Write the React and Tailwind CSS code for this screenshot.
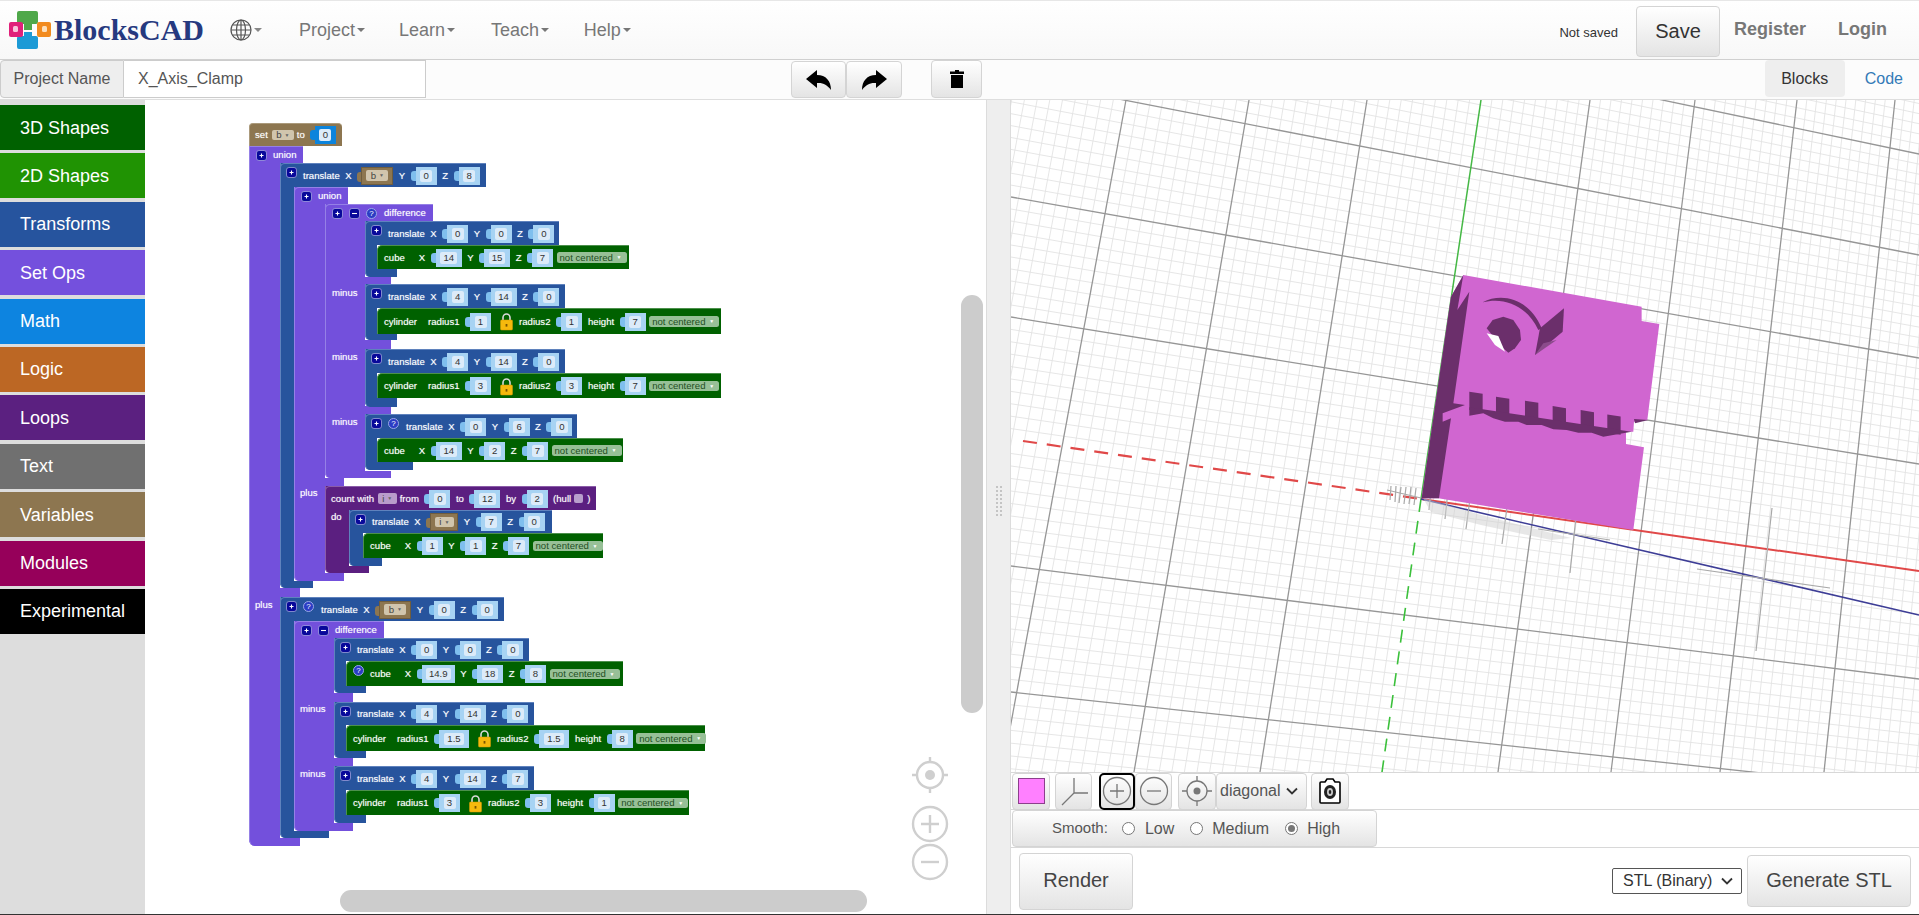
import React from 'react';

const C = {
  p: 'bg-[#7350dc] border-[#9580e6]',
  b: 'bg-[#27549d] border-[#5f82bd]',
  g: 'bg-[#006100] border-[#4c904c]',
  d: 'bg-[#5b1f80] border-[#8b5ca8]',
  t: 'bg-[#8d7650] border-[#ab9a7c]',
};
const glow = '[text-shadow:0_0_1px_rgba(255,255,255,0.55)]';

function Piece({ c, p }) {
  return <div className={`absolute border-l ${C[c]} ${p}`} />;
}
function Row({ c, p, children }) {
  return <div className={`absolute flex items-center border-t border-l whitespace-nowrap ${C[c]} ${p}`}>{children}</div>;
}
function Txt({ children, ml = 'ml-[5.5px]' }) {
  return <span className={`shrink-0 text-white leading-none ${glow} ${ml}`}>{children}</span>;
}
function Label({ p, children }) {
  return <span className={`absolute text-white leading-[12px] ${glow} ${p}`}>{children}</span>;
}
const NW = { 1: 'w-[21px]', 2: 'w-[26px]', 3: 'w-[30px]', 4: 'w-[33px]' };
function N({ v, ml = 'ml-[10.5px]', dark }) {
  return (
    <span className={`relative shrink-0 h-[18px] flex items-center justify-center ${dark ? 'bg-[#0c84dc]' : 'bg-[#a7d3f3]'} ${NW[String(v).length]} ${ml}`}>
      <span className={`absolute left-[-5px] top-[4px] w-[5px] h-[10px] rounded-l-[3px] ${dark ? 'bg-[#0c84dc]' : 'bg-[#7fbfee]'}`} />
      <span className="px-[3px] h-[12px] min-w-[12px] rounded-[2px] bg-[#dcebf9] text-[#333] text-center leading-[12px]">{v}</span>
    </span>
  );
}
function Mini({ v, w = 'w-[22px]', bg = 'bg-[#d1c5ad]', ml = 'ml-[4px]' }) {
  return (
    <span className={`shrink-0 h-[10.5px] rounded-[2px] flex items-center justify-center gap-[3px] text-[#444] leading-none ${w} ${bg} ${ml}`}>
      {v}<span className="text-[5px] text-[#666]">▼</span>
    </span>
  );
}
function Var({ v, w = 'w-[32px]', iw = 'w-[22px]' }) {
  return (
    <span className={`relative shrink-0 ml-[9.6px] h-[18px] flex items-center justify-center bg-[#8d7650] border border-[#6f5d3e] ${w}`}>
      <span className="absolute left-[-5px] top-[4px] w-[4px] h-[10px] rounded-l-[3px] bg-[#8d7650]" />
      <Mini v={v} w={iw} ml="ml-0" />
    </span>
  );
}
function Dd() {
  return (
    <span className="shrink-0 ml-[3.5px] w-[70px] h-[10.5px] rounded-[2.5px] bg-[#97c097] text-[#1f4f1f] flex items-center justify-between pl-[3px] pr-[5px] leading-none">
      not centered<span className="text-[5px] text-white">▼</span>
    </span>
  );
}
function Btn({ minus, ml = 'ml-[5px]' }) {
  return (
    <svg width="11" height="11" viewBox="0 0 11 11" className={`shrink-0 self-start mt-[3px] ${ml}`}>
      <rect x="0.5" y="0.5" width="10" height="10" rx="2.5" fill="#08089a" stroke="#c8c8ee" strokeWidth="0.6" />
      <path d={minus ? 'M3 5.5H8' : 'M3.5 5.5H7.5M5.5 3.5V7.5'} stroke="#fff" strokeWidth="1.1" />
    </svg>
  );
}
function Q({ ml = 'ml-[6px]' }) {
  return (
    <span className={`shrink-0 self-start mt-[3px] w-[11px] h-[11px] rounded-full bg-[#2b3cc4] border border-[#9aa7e8] text-white text-[8px] leading-[9px] text-center ${ml}`}>?</span>
  );
}
function Lock() {
  return (
    <svg width="13" height="19" viewBox="0 0 13 19" className="shrink-0 ml-[9px]">
      <path d="M3 9V5.5a3.5 3.5 0 0 1 7 0V9" fill="none" stroke="#d9d9d9" strokeWidth="1.6" />
      <rect x="0.5" y="8" width="12" height="10" rx="1" fill="#f6b90d" stroke="#d99a05" strokeWidth="0.5" />
      <rect x="5.6" y="12" width="1.8" height="2.6" fill="#7a5500" />
    </svg>
  );
}
function Translate({ p, v, q, vr, vw, iw }) {
  return (
    <Row c="b" p={p}>
      <Btn />
      {q && <Q />}
      <Txt ml={q ? 'ml-[7px]' : 'ml-[6px]'}>translate</Txt>
      <Txt>X</Txt>
      {vr ? <Var v={vr} w={vw} iw={iw} /> : <N v={v[0]} />}
      <Txt>Y</Txt>
      <N v={v[1]} />
      <Txt>Z</Txt>
      <N v={v[2]} />
    </Row>
  );
}
function Cube({ p, v, q }) {
  return (
    <Row c="g" p={`rounded-tl-[5px] ${p}`}>
      {q && <Q />}
      <Txt ml="ml-[6px]">cube</Txt>
      <Txt ml="ml-[14px]">X</Txt>
      <N v={v[0]} />
      <Txt>Y</Txt>
      <N v={v[1]} />
      <Txt>Z</Txt>
      <N v={v[2]} />
      <Dd />
    </Row>
  );
}
function Cylinder({ p, a, b, h }) {
  return (
    <Row c="g" p={`rounded-tl-[5px] ${p}`}>
      <Txt ml="ml-[6px]">cylinder</Txt>
      <Txt ml="ml-[11px]">radius1</Txt>
      <N v={a} />
      <Lock />
      <Txt ml="ml-[6px]">radius2</Txt>
      <N v={b} />
      <Txt ml="ml-[6px]">height</Txt>
      <N v={h} />
      <Dd />
    </Row>
  );
}

function Blocks() {
  return (
    <div className="absolute left-[-145px] top-[-100px] w-[1000px] h-[900px] text-[9.6px]">
      {/* outer union */}
      <Piece c="p" p="left-[249px] top-[146px] w-[31px] h-[700px] rounded-bl-[6px]" />
      <Piece c="p" p="left-[249px] top-[588px] w-[51px] h-[9px]" />
      <Piece c="p" p="left-[249px] top-[838px] w-[51px] h-[8px] rounded-bl-[6px]" />
      <Row c="t" p="left-[249px] top-[123px] w-[93px] h-[23px] rounded-t-[4px]">
        <Txt ml="ml-[5px]">set</Txt>
        <Mini v="b" />
        <Txt ml="ml-[3px]">to</Txt>
        <N v="0" dark ml="ml-[10px]" />
      </Row>
      <Row c="p" p="left-[249px] top-[146px] w-[54px] h-[17px]">
        <Btn ml="ml-[6px]" />
        <Txt ml="ml-[6px]">union</Txt>
      </Row>
      <Label p="left-[255px] top-[599px]">plus</Label>

      {/* first translate */}
      <Piece c="b" p="left-[280px] top-[163px] w-[14px] h-[425px] rounded-bl-[5px]" />
      <Piece c="b" p="left-[280px] top-[581px] w-[33px] h-[7px] rounded-bl-[5px]" />
      <Translate p="left-[280px] top-[163px] w-[206px] h-[24px] rounded-tl-[5px]" v={[0, 0, 8]} vr="b" />

      {/* inner union */}
      <Piece c="p" p="left-[294px] top-[187px] w-[31px] h-[394px] rounded-bl-[5px]" />
      <Piece c="p" p="left-[294px] top-[478px] w-[50px] h-[8px]" />
      <Piece c="p" p="left-[294px] top-[573px] w-[50px] h-[8px] rounded-bl-[5px]" />
      <Row c="p" p="left-[294px] top-[187px] w-[54px] h-[17px] rounded-tl-[5px]">
        <Btn ml="ml-[6px]" />
        <Txt ml="ml-[6px]">union</Txt>
      </Row>
      <Label p="left-[300px] top-[487px]">plus</Label>

      {/* difference 1 */}
      <Piece c="p" p="left-[325px] top-[204px] w-[40px] h-[274px] rounded-bl-[5px]" />
      <Piece c="p" p="left-[325px] top-[277px] w-[66px] h-[8px]" />
      <Piece c="p" p="left-[325px] top-[340px] w-[66px] h-[9px]" />
      <Piece c="p" p="left-[325px] top-[406px] w-[66px] h-[8px]" />
      <Piece c="p" p="left-[325px] top-[471px] w-[66px] h-[7px] rounded-bl-[5px]" />
      <Row c="p" p="left-[325px] top-[204px] w-[108px] h-[17px] rounded-tl-[5px]">
        <Btn ml="ml-[6px]" />
        <Btn minus ml="ml-[6px]" />
        <Q />
        <Txt ml="ml-[7px]">difference</Txt>
      </Row>
      <Label p="left-[332px] top-[287px]">minus</Label>
      <Label p="left-[332px] top-[351px]">minus</Label>
      <Label p="left-[332px] top-[416px]">minus</Label>

      <Piece c="b" p="left-[365px] top-[221px] w-[12px] h-[56px] rounded-bl-[5px]" />
      <Piece c="b" p="left-[365px] top-[269px] w-[32px] h-[8px] rounded-bl-[5px]" />
      <Translate p="left-[365px] top-[221px] w-[194px] h-[24px] rounded-tl-[5px]" v={[0, 0, 0]} />
      <Cube p="left-[377px] top-[245px] w-[252px] h-[24px]" v={[14, 15, 7]} />

      <Piece c="b" p="left-[365px] top-[284px] w-[12px] h-[56px] rounded-bl-[5px]" />
      <Piece c="b" p="left-[365px] top-[334px] w-[32px] h-[6px] rounded-bl-[5px]" />
      <Translate p="left-[365px] top-[284px] w-[200px] h-[24px] rounded-tl-[5px]" v={[4, 14, 0]} />
      <Cylinder p="left-[377px] top-[308px] w-[344px] h-[26px]" a={1} b={1} h={7} />

      <Piece c="b" p="left-[365px] top-[349px] w-[12px] h-[58px] rounded-bl-[5px]" />
      <Piece c="b" p="left-[365px] top-[398px] w-[32px] h-[9px] rounded-bl-[5px]" />
      <Translate p="left-[365px] top-[349px] w-[200px] h-[24px] rounded-tl-[5px]" v={[4, 14, 0]} />
      <Cylinder p="left-[377px] top-[373px] w-[344px] h-[25px]" a={3} b={3} h={7} />

      <Piece c="b" p="left-[365px] top-[414px] w-[12px] h-[56px] rounded-bl-[5px]" />
      <Piece c="b" p="left-[365px] top-[462px] w-[48px] h-[8px] rounded-bl-[5px]" />
      <Translate p="left-[365px] top-[414px] w-[212px] h-[24px] rounded-tl-[5px]" v={[0, 6, 0]} q />
      <Cube p="left-[377px] top-[438px] w-[246px] h-[24px]" v={[14, 2, 7]} />

      {/* count */}
      <Piece c="d" p="left-[325px] top-[486px] w-[24px] h-[87px] rounded-bl-[5px]" />
      <Piece c="d" p="left-[325px] top-[566px] w-[44px] h-[7px] rounded-bl-[5px]" />
      <Row c="d" p="left-[325px] top-[486px] w-[271px] h-[24px] rounded-tl-[5px]">
        <Txt ml="ml-[5px]">count with</Txt>
        <Mini v="i" w="w-[19px]" bg="bg-[#b99ccb]" ml="ml-[3.5px]" />
        <Txt ml="ml-[3px]">from</Txt>
        <N v="0" />
        <Txt>to</Txt>
        <N v="12" />
        <Txt>by</Txt>
        <N v="2" />
        <Txt>(hull</Txt>
        <span className="ml-[3px] w-[9px] h-[9px] rounded-[2px] bg-[#b89fcc]" />
        <Txt ml="ml-[4px]">)</Txt>
      </Row>
      <Label p="left-[331px] top-[511px]">do</Label>
      <Piece c="b" p="left-[349px] top-[510px] w-[14px] h-[56px] rounded-bl-[5px]" />
      <Piece c="b" p="left-[349px] top-[558px] w-[33px] h-[8px] rounded-bl-[5px]" />
      <Translate p="left-[349px] top-[510px] w-[203px] h-[23px] rounded-tl-[5px]" v={[0, 7, 0]} vr="i" vw="w-[28px]" iw="w-[19px]" />
      <Cube p="left-[363px] top-[533px] w-[240px] h-[25px]" v={[1, 1, 7]} />

      {/* second translate */}
      <Piece c="b" p="left-[280px] top-[597px] w-[14px] h-[241px] rounded-bl-[5px]" />
      <Piece c="b" p="left-[280px] top-[831px] w-[49px] h-[7px] rounded-bl-[5px]" />
      <Translate p="left-[280px] top-[597px] w-[224px] h-[24px] rounded-tl-[5px]" v={[0, 0, 0]} q vr="b" />

      <Piece c="p" p="left-[294px] top-[621px] w-[40px] h-[210px] rounded-bl-[5px]" />
      <Piece c="p" p="left-[294px] top-[693px] w-[59px] h-[9px]" />
      <Piece c="p" p="left-[294px] top-[758px] w-[59px] h-[9px]" />
      <Piece c="p" p="left-[294px] top-[823px] w-[59px] h-[8px] rounded-bl-[5px]" />
      <Row c="p" p="left-[294px] top-[621px] w-[90px] h-[17px] rounded-tl-[5px]">
        <Btn ml="ml-[6px]" />
        <Btn minus ml="ml-[6px]" />
        <Txt ml="ml-[6px]">difference</Txt>
      </Row>
      <Label p="left-[300px] top-[703px]">minus</Label>
      <Label p="left-[300px] top-[768px]">minus</Label>

      <Piece c="b" p="left-[334px] top-[638px] w-[12px] h-[55px] rounded-bl-[5px]" />
      <Piece c="b" p="left-[334px] top-[686px] w-[32px] h-[7px] rounded-bl-[5px]" />
      <Translate p="left-[334px] top-[638px] w-[195px] h-[23px] rounded-tl-[5px]" v={[0, 0, 0]} />
      <Cube p="left-[346px] top-[661px] w-[277px] h-[25px]" v={['14.9', 18, 8]} q />

      <Piece c="b" p="left-[334px] top-[702px] w-[12px] h-[56px] rounded-bl-[5px]" />
      <Piece c="b" p="left-[334px] top-[751px] w-[32px] h-[7px] rounded-bl-[5px]" />
      <Translate p="left-[334px] top-[702px] w-[200px] h-[23px] rounded-tl-[5px]" v={[4, 14, 0]} />
      <Cylinder p="left-[346px] top-[725px] w-[359px] h-[26px]" a="1.5" b="1.5" h={8} />

      <Piece c="b" p="left-[334px] top-[766px] w-[12px] h-[57px] rounded-bl-[5px]" />
      <Piece c="b" p="left-[334px] top-[815px] w-[32px] h-[8px] rounded-bl-[5px]" />
      <Translate p="left-[334px] top-[766px] w-[200px] h-[24px] rounded-tl-[5px]" v={[4, 14, 7]} />
      <Cylinder p="left-[346px] top-[790px] w-[343px] h-[25px]" a={3} b={3} h={1} />
    </div>
  );
}

const tops = [-12, 115, 238, 356, 470, 579, 684, 786, 884, 980];
const bots = [-140, -9, 123, 249, 371, 487, 600, 709, 813, 915];
const hl = [-255, -137, -22, 97, 217, 341, 466, 592, 720];
const hr = [-47, 54, 155, 258, 364, 471, 579, 690, 800];

function lerp(a, b, t) {
  return a + (b - a) * t;
}

const teeth = [
  [298, 425],
  [378, 440],
  [465, 452],
  [548, 468],
  [632, 480],
  [712, 493],
];

function Grid() {
  const minor = [];
  for (let i = 0; i < tops.length - 1; i++) {
    for (let j = 1; j < 10; j++) {
      minor.push([lerp(tops[i], tops[i + 1], j / 10), 0, lerp(bots[i], bots[i + 1], j / 10), 672]);
    }
  }
  for (let i = 0; i < hl.length - 1; i++) {
    for (let j = 1; j < 10; j++) {
      minor.push([0, lerp(hl[i], hl[i + 1], j / 10), 908, lerp(hr[i], hr[i + 1], j / 10)]);
    }
  }
  const major = [];
  tops.forEach((t, i) => {
    if (i !== 4) major.push([t, 0, bots[i], 672]);
  });
  hl.forEach((l, i) => {
    if (i !== 5) major.push([0, l, 908, hr[i]]);
  });
  const ticks = [
    [761, 408, 745, 551], [686, 469, 819, 488], [567, 398, 559, 473], [498, 393, 491, 444],
    [460, 391, 455, 429], [437, 391, 434, 419], [527, 429, 599, 440], [420, 390, 418, 410],
    [405, 388, 403, 405], [400, 387, 398, 404], [395, 387, 393, 404], [390, 387, 388, 403],
    [385, 386, 384, 402], [380, 386, 379, 400], [376, 390, 410, 398],
  ];
  return (
    <svg viewBox="0 0 908 672" className="block w-full h-[672px] bg-white">
      {minor.map((l, i) => (
        <line key={i} x1={l[0]} y1={l[1]} x2={l[2]} y2={l[3]} stroke="#e3e3e3" strokeWidth="0.9" />
      ))}
      {major.map((l, i) => (
        <line key={i} x1={l[0]} y1={l[1]} x2={l[2]} y2={l[3]} stroke="#969696" strokeWidth="1.3" />
      ))}
      <line x1="12" y1="341" x2="410" y2="399" stroke="#e04848" strokeWidth="2.2" strokeDasharray="14 10" />
      <line x1="410" y1="399" x2="908" y2="471" stroke="#e04848" strokeWidth="2" />
      <line x1="470" y1="0" x2="410" y2="399" stroke="#45b845" strokeWidth="1.5" />
      <line x1="410" y1="399" x2="371" y2="672" stroke="#3bc03b" strokeWidth="1.6" strokeDasharray="13 9" />
      <line x1="410" y1="399" x2="908" y2="515" stroke="#3d3d96" strokeWidth="1.6" />
      {ticks.map((l, i) => (
        <line key={i} x1={l[0]} y1={l[1]} x2={l[2]} y2={l[3]} stroke="#a9a9a9" strokeWidth="1.2" />
      ))}
      <polygon points="412,398 470,415 560,438 540,440 470,425 420,412" fill="#cfcfcf" opacity="0.5" />
      <g transform="translate(359 150) scale(0.3333)">
        <polygon points="280,75 815,170 815,213 868,222 832,510 792,515 790,545 768,545 768,582 822,592 790,840 205,745 155,745 243,140" fill="#d066d0" />
        <polygon points="280,75 243,140 155,745 207,745 243,505 218,515 218,490 285,465 250,460 298,125 262,180" fill="#6b2f6b" />
        {teeth.map(([x, y]) => (
          <rect key={x} x={x} y={y} width="40" height="55" fill="#6b2f6b" transform={`skewY(9) translate(0 ${-x * 0.158})`} />
        ))}
        <polygon points="298,472 750,540 785,545 700,560 665,548 625,548 590,540 550,538 515,525 470,525 445,515 405,515 370,505 340,490 298,497" fill="#6b2f6b" />
        <polygon points="792,507 835,510 795,520" fill="#6b2f6b" />
        <polygon points="350,235 368,210 400,200 430,210 450,240 453,270 435,295 415,308 395,290" fill="#6b2f6b" />
        <polygon points="350,250 385,258 405,305 375,285" fill="#ffffff" />
        <path d="M338,157 C400,125 480,150 515,235 L505,240 C470,165 400,140 338,157 Z" fill="#6b2f6b" />
        <polygon points="582,175 578,245 495,315 510,235" fill="#6b2f6b" />
        <polygon points="560,270 495,315 520,280" fill="#8b4b8b" />
      </g>
    </svg>
  );
}

const btn = 'bg-gradient-to-b from-white to-[#e4e4e4] border border-[#d4d4d4] rounded-[4px] flex items-center justify-center';

function Caret({ c = 'border-t-[#777]' }) {
  return <span className={`inline-block ml-[2px] w-0 h-0 border-x-[4px] border-x-transparent border-t-[4px] ${c}`} />;
}

function Nav({ children, ml }) {
  return (
    <span className={`flex items-center text-[18px] text-[#777] ${ml}`}>
      {children}
      <Caret />
    </span>
  );
}

function Radio({ on }) {
  return (
    <span className="shrink-0 w-[13px] h-[13px] rounded-full border border-[#777] bg-white flex items-center justify-center">
      {on && <span className="w-[7px] h-[7px] rounded-full bg-[#777]" />}
    </span>
  );
}

export default function App() {
  return (
    <div className="w-full h-screen overflow-hidden flex flex-col bg-white font-['Liberation_Sans',Arial,sans-serif]">
      {/* Header */}
      <header className="h-[60px] shrink-0 flex items-center border-t border-t-[#e7e7e7] border-b border-b-[#d0d0d0] bg-gradient-to-b from-white to-[#f8f8f8]">
        <svg width="44" height="40" viewBox="0 0 44 40" className="ml-[8px] shrink-0">
          <path d="M11 1h17a2 2 0 0 1 2 2v9a2 2 0 0 1-2 2h-4v6h-8v-6h-5a2 2 0 0 1-2-2V3a2 2 0 0 1 2-2z" fill="#4fa84a" />
          <path d="M16 22h8v4h4a2 2 0 0 1 2 2v9a2 2 0 0 1-2 2H11a2 2 0 0 1-2-2v-9a2 2 0 0 1 2-2h5z" fill="#1c9ad6" />
          <rect x="1" y="12" width="14" height="15" rx="2" fill="#e0217a" />
          <rect x="5" y="16" width="5" height="6" rx="1.5" fill="#f8c6dc" />
          <rect x="29" y="12" width="14" height="15" rx="2" fill="#f28b1f" />
          <rect x="34" y="16" width="5" height="6" rx="1.5" fill="#fde0bd" />
        </svg>
        <span className="ml-[2px] text-[30px] font-bold text-[#26397f] leading-none font-['Liberation_Serif',serif]">BlocksCAD</span>
        <svg width="22" height="22" viewBox="0 0 22 22" className="ml-[26px] shrink-0" fill="none" stroke="#555" strokeWidth="1.2">
          <circle cx="11" cy="11" r="10" />
          <ellipse cx="11" cy="11" rx="4.5" ry="10" />
          <path d="M11 1v20M1 11h20M2.5 6h17M2.5 16h17" />
        </svg>
        <Caret c="border-t-[#888]" />
        <Nav ml="ml-[37px]">Project</Nav>
        <Nav ml="ml-[34px]">Learn</Nav>
        <Nav ml="ml-[36px]">Teach</Nav>
        <Nav ml="ml-[34.5px]">Help</Nav>
        <span className="ml-auto text-[13px] text-[#333] mt-[6px]">Not saved</span>
        <span className={`ml-[18px] mt-[2px] w-[84px] h-[51px] text-[20px] text-[#333] ${btn}`}>Save</span>
        <span className="ml-[14px] mb-[2px] text-[18px] font-bold text-[#777]">Register</span>
        <span className="ml-[32px] mb-[2px] mr-[32px] text-[18px] font-bold text-[#777]">Login</span>
      </header>

      {/* Project row */}
      <div className="h-[40px] shrink-0 flex items-start border-b border-b-[#dedede] bg-[#fcfcfc] relative">
        <div className="flex h-[38px] w-[426px]">
          <span className="w-[124px] flex items-center justify-center text-[16px] text-[#555] bg-[#eee] border border-[#ccc] rounded-l-[4px]">Project Name</span>
          <span className="flex-1 flex items-center pl-[14px] text-[16px] text-[#555] bg-white border border-l-0 border-[#ccc]">X_Axis_Clamp</span>
        </div>
        <span className={`ml-[365px] mt-[1px] w-[55px] h-[37px] ${btn}`}>
          <svg width="28" height="24" viewBox="0 0 28 24"><path d="M12 2 1 11l11 9v-5c6-.5 10 1.5 14 7 0-9-5-15-14-15z" fill="#000" /></svg>
        </span>
        <span className={`mt-[1px] w-[56px] h-[37px] ${btn}`}>
          <svg width="28" height="24" viewBox="0 0 28 24"><path d="M16 2l11 9-11 9v-5c-6-.5-10 1.500-14 7 0-9 5-15 14-15z" fill="#000" /></svg>
        </span>
        <span className={`ml-[29px] w-[51px] h-[38px] ${btn}`}>
          <svg width="14" height="18" viewBox="0 0 14 18"><path d="M5 0h4v1.500h5V4H0V1.500h5zM1 5h12v13H1z" fill="#000" /></svg>
        </span>
        <span className="ml-auto w-[80px] h-[37px] flex items-center justify-center text-[16px] text-[#333] bg-[#eee] rounded-[4px]">Blocks</span>
        <span className="ml-[20px] mr-[16px] h-[37px] flex items-center text-[16px] text-[#337ab7]">Code</span>
      </div>

      {/* Main */}
      <div className="flex-1 flex min-h-0">
        <aside className="w-[145px] shrink-0 bg-[#dddddd] pt-[5px] flex flex-col gap-[3.4px]">
          {[
            ['3D Shapes', 'bg-[#006100]'],
            ['2D Shapes', 'bg-[#209303]'],
            ['Transforms', 'bg-[#26549e]'],
            ['Set Ops', 'bg-[#7450dd]'],
            ['Math', 'bg-[#0d84e0]'],
            ['Logic', 'bg-[#bc6724]'],
            ['Loops', 'bg-[#5b2080]'],
            ['Text', 'bg-[#707070]'],
            ['Variables', 'bg-[#8d7650]'],
            ['Modules', 'bg-[#96005a]'],
            ['Experimental', 'bg-black'],
          ].map(([t, c]) => (
            <div key={t} className={`h-[45px] flex items-center pl-[20px] pt-[1px] text-[18px] text-white ${c}`}>{t}</div>
          ))}
        </aside>

        <section className="w-[841px] shrink-0 relative overflow-hidden bg-white">
          <Blocks />
          <div className="absolute left-[816px] top-[195px] w-[22px] h-[418px] rounded-[11px] bg-[#cccccc]" />
          <div className="absolute left-[195px] top-[790px] w-[527px] h-[22px] rounded-[11px] bg-[#cccccc]" />
          <svg width="40" height="40" viewBox="0 0 40 40" className="absolute left-[765px] top-[655px]" fill="none" stroke="#cfcfcf" strokeWidth="2.4">
            <circle cx="20" cy="20" r="13" />
            <circle cx="20" cy="20" r="5" fill="#cfcfcf" stroke="none" />
            <path d="M20 2v5M20 33v5M2 20h5M33 20h5" />
          </svg>
          <svg width="40" height="40" viewBox="0 0 40 40" className="absolute left-[765px] top-[704px]" fill="none" stroke="#cfcfcf" strokeWidth="2.4">
            <circle cx="20" cy="20" r="17" />
            <path d="M20 11v18M11 20h18" />
          </svg>
          <svg width="40" height="40" viewBox="0 0 40 40" className="absolute left-[765px] top-[742px]" fill="none" stroke="#cfcfcf" strokeWidth="2.4">
            <circle cx="20" cy="20" r="17" />
            <path d="M11 20h18" />
          </svg>
        </section>

        <div className="w-[25px] shrink-0 bg-[#eeeeee] border-x border-[#dcdcdc] flex items-center justify-center">
          <div className="grid grid-cols-2 gap-[2px] mb-[12px]">
            {Array.from({ length: 16 }).map((_, i) => (
              <span key={i} className="w-[2px] h-[2px] bg-[#c4c4c4]" />
            ))}
          </div>
        </div>

        <div className="flex-1 min-w-0 flex flex-col">
          <Grid />
          <div className="h-[38px] flex items-center border-y border-[#d8d8d8] pl-[1px]">
            <span className={`w-[38px] h-[37px] ${btn}`}>
              <span className="w-[27px] h-[26px] bg-[#ff80ff] border border-[#8c3f8c]" />
            </span>
            <span className={`ml-[5px] w-[37px] h-[37px] ${btn}`}>
              <svg width="30" height="30" viewBox="0 0 30 30" fill="none" stroke="#777" strokeWidth="1.3"><path d="M15 2v15M15 17h14M15 17 3 29" /></svg>
            </span>
            <span className={`ml-[7px] w-[36px] h-[37px] !border-2 !border-black !rounded-[5px] ${btn}`}>
              <svg width="30" height="30" viewBox="0 0 30 30" fill="none" stroke="#777" strokeWidth="1.3"><circle cx="15" cy="15" r="13.500" /><path d="M15 8v14M8 15h14" /></svg>
            </span>
            <span className={`w-[37px] h-[37px] ${btn}`}>
              <svg width="30" height="30" viewBox="0 0 30 30" fill="none" stroke="#777" strokeWidth="1.3"><circle cx="15" cy="15" r="13.500" /><path d="M8 15h14" /></svg>
            </span>
            <span className={`ml-[6px] w-[38px] h-[37px] ${btn}`}>
              <svg width="32" height="32" viewBox="0 0 32 32" fill="none" stroke="#777" strokeWidth="1.3"><circle cx="16" cy="16" r="10" /><circle cx="16" cy="16" r="3.500" fill="#777" stroke="none" /><path d="M16 1v5M16 26v5M1 16h5M26 16h5" /></svg>
            </span>
            <span className={`w-[91px] h-[37px] !justify-start pl-[3px] gap-[5px] text-[16px] text-[#555] ${btn}`}>
              diagonal
              <svg width="12" height="8" viewBox="0 0 12 8" fill="none" stroke="#333" strokeWidth="1.8"><path d="M1 1.500l5 5 5-5" /></svg>
            </span>
            <span className={`ml-[4px] w-[38px] h-[37px] ${btn}`}>
              <svg width="22" height="26" viewBox="0 0 22 26"><path d="M6 4 8 1h6l2 3h4a1 1 0 0 1 1 1v19a1 1 0 0 1-1 1H2a1 1 0 0 1-1-1V5a1 1 0 0 1 1-1z" fill="#fff" stroke="#000" strokeWidth="1.6" /><ellipse cx="11" cy="14" rx="6" ry="7" fill="#222" /><ellipse cx="11" cy="14" rx="3" ry="4" fill="#ccc" /><ellipse cx="11" cy="14" rx="1.300" ry="2" fill="#222" /></svg>
            </span>
          </div>
          <div className="h-[38px] flex items-start border-b border-[#d8d8d8] pl-[1px]">
            <div className={`w-[365px] h-[37px] !justify-start pl-[39px] text-[15px] text-[#555] ${btn}`}>
              <span>Smooth:</span>
              <span className="ml-[14px] mr-[10px]"><Radio /></span>
              <span className="text-[16px]">Low</span>
              <span className="ml-[16px] mr-[9px]"><Radio /></span>
              <span className="text-[16px]">Medium</span>
              <span className="ml-[16px] mr-[9px]"><Radio on /></span>
              <span className="text-[16px]">High</span>
            </div>
          </div>
          <div className="flex-1 flex items-center pl-[8px] pr-[8px]">
            <span className={`w-[114px] h-[57px] pb-[2px] text-[20px] text-[#444] ${btn}`}>Render</span>
            <span className="ml-auto w-[130px] h-[26px] flex items-center justify-between pl-[10px] pr-[8px] border border-[#555] rounded-[2px] text-[16px] text-[#333] bg-white">
              STL (Binary)
              <svg width="12" height="8" viewBox="0 0 12 8" fill="none" stroke="#333" strokeWidth="1.8"><path d="M1 1.500l5 5 5-5" /></svg>
            </span>
            <span className={`ml-[5px] w-[164px] h-[52px] pb-[2px] text-[20px] text-[#444] ${btn}`}>Generate STL</span>
          </div>
        </div>
      </div>
      <div className="h-[1px] shrink-0 bg-[#333]" />
    </div>
  );
}
